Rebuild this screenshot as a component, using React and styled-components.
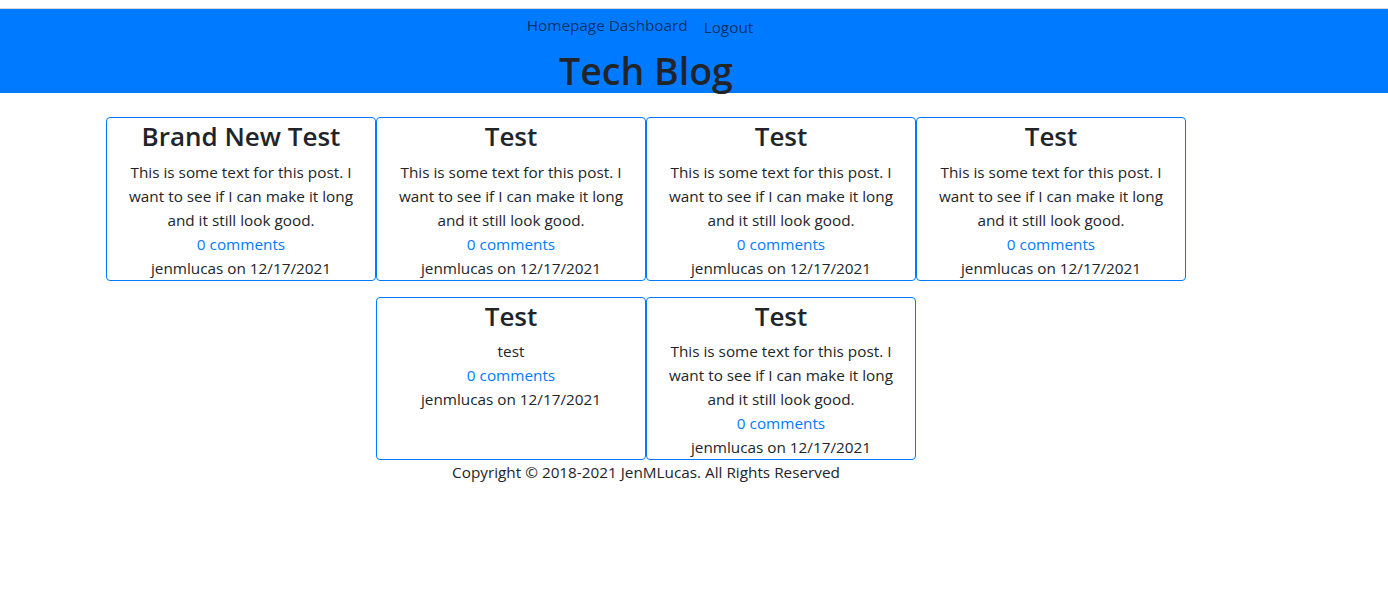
import React from "react";
import styled, { createGlobalStyle } from "styled-components";

const GlobalStyle = createGlobalStyle`
  * { box-sizing: border-box; }
  body {
    margin: 0;
    padding-top: 8px;
    background: #fff;
    color: #212529;
    font-family: "Open Sans", "Noto Sans", sans-serif;
    font-size: 15.3px;
    line-height: 24px;
  }
  a { color: #007bff; text-decoration: none; }
`;

const posts = [
  {
    id: 1,
    title: "Brand New Test",
    body: "This is some text for this post. I want to see if I can make it long and it still look good.",
  },
  {
    id: 2,
    title: "Test",
    body: "This is some text for this post. I want to see if I can make it long and it still look good.",
  },
  {
    id: 3,
    title: "Test",
    body: "This is some text for this post. I want to see if I can make it long and it still look good.",
  },
  {
    id: 4,
    title: "Test",
    body: "This is some text for this post. I want to see if I can make it long and it still look good.",
  },
  { id: 5, title: "Test", body: "test" },
  {
    id: 6,
    title: "Test",
    body: "This is some text for this post. I want to see if I can make it long and it still look good.",
  },
];

const App = () => {
  return (
    <>
      <GlobalStyle />
      <Header>
        <Nav>
          <NavLink href="#">Homepage Dashboard</NavLink>
          <LogoutButton type="button">Logout</LogoutButton>
        </Nav>
        <SiteTitle>Tech Blog</SiteTitle>
      </Header>
      <Main>
        <PostGrid>
          {posts.map((post) => (
            <PostCard key={post.id}>
              <PostTitle>{post.title}</PostTitle>
              <PostText>{post.body}</PostText>
              <CommentLink href="#">0 comments</CommentLink>
              <PostMeta>jenmlucas on 12/17/2021</PostMeta>
            </PostCard>
          ))}
        </PostGrid>
        <Footer>Copyright © 2018-2021 JenMLucas. All Rights Reserved</Footer>
      </Main>
    </>
  );
};

const Header = styled.header`
  background: #007bff;
  border-top: 1px solid #d6d9dc;
  display: flex;
  flex-direction: column;
  align-items: center;
  padding-right: 96px;
`;

const Nav = styled.nav`
  display: flex;
  align-items: flex-start;
  justify-content: center;
  gap: 16px;
  height: 36px;
  padding-right: 12px;
`;

const NavLink = styled.a`
  && {
    color: rgba(0, 0, 0, 0.62);
    font-size: 15.3px;
    line-height: 24px;
    margin-top: 4px;
  }
`;

const LogoutButton = styled.button`
  background: none;
  border: none;
  padding: 0;
  margin-top: 6px;
  font-family: inherit;
  font-size: 15.3px;
  line-height: 24px;
  color: rgba(0, 0, 0, 0.62);
  cursor: pointer;
`;

const SiteTitle = styled.h1`
  margin: 0;
  padding-top: 3px;
  font-size: 37.5px;
  font-weight: 600;
  line-height: 45px;
  color: #212529;
`;

const Main = styled.main`
  width: 1292px;
  padding-top: 24px;
  display: flex;
  flex-direction: column;
  align-items: center;
`;

const PostGrid = styled.div`
  display: flex;
  flex-wrap: wrap;
  justify-content: center;
  row-gap: 16px;
  width: 100%;
`;

const PostCard = styled.article`
  width: 270px;
  border: 1px solid #007bff;
  border-radius: 4px;
  padding: 0 18px;
  text-align: center;
  display: flex;
  flex-direction: column;
`;

const PostTitle = styled.h3`
  margin: 0 0 6px;
  padding-top: 2px;
  font-size: 26px;
  font-weight: 600;
  line-height: 33.6px;
  color: #212529;
`;

const PostText = styled.p`
  margin: 0;
`;

const CommentLink = styled.a`
  display: block;
`;

const PostMeta = styled.div``;

const Footer = styled.footer`
  text-align: center;
`;

export default App;
